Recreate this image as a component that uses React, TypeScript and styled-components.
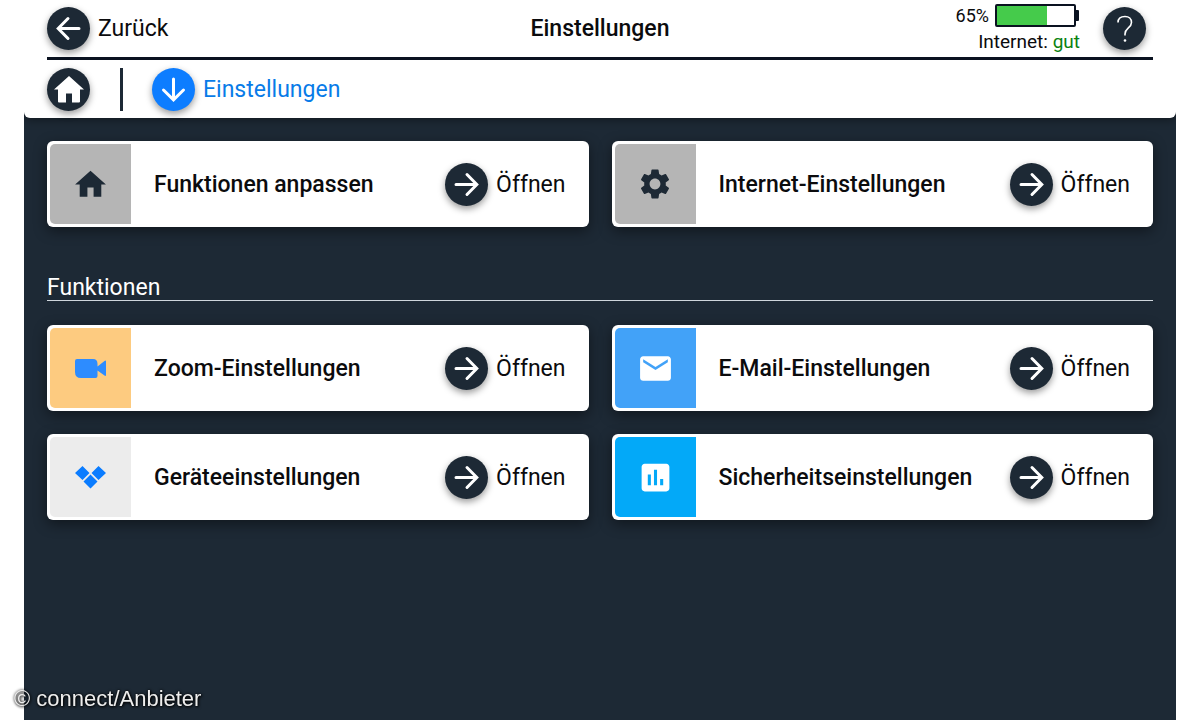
import React from "react";
import styled, { createGlobalStyle } from "styled-components";
import { MdHome, MdSettings, MdEmail, MdInsertChart } from "react-icons/md";

const navy = "#1d2935";

const GlobalStyle = createGlobalStyle`
  * { box-sizing: border-box; }
  body {
    margin: 0;
    background: #fff;
    color: #0b0b0d;
    font-family: Roboto, "Liberation Sans", sans-serif;
    font-size: 23px;
    line-height: 29px;
  }
  button { font: inherit; color: inherit; border: 0; padding: 0; background: none; cursor: pointer; }
  a { color: inherit; text-decoration: none; }
  h1, h2, h3 { margin: 0; font-size: inherit; }
`;

const Shell = styled.div`
  min-height: 100vh;
  margin: 0 24px;
  overflow: hidden;
  background: ${navy};
`;

const Header = styled.header`
  padding: 0 23px;
  background: #fff;
  border-radius: 0 0 6px 6px;
  box-shadow: 0 2px 10px rgba(0, 0, 0, 0.4);
`;

const TopBar = styled.div`
  display: grid;
  grid-template-columns: 1fr auto 1fr;
  align-items: center;
  height: 60px;
  border-bottom: 3px solid #0a1220;
`;

const Title = styled.h1`
  font-weight: 500;
`;

const Breadcrumb = styled.nav`
  display: flex;
  align-items: center;
  height: 58px;
`;

const Divider = styled.span`
  width: 3px;
  height: 43px;
  margin: 0 29px 0 30px;
  background: ${navy};
`;

const Round = styled.span<{ $color?: string }>`
  display: flex;
  flex: none;
  align-items: center;
  justify-content: center;
  width: 43px;
  height: 43px;
  border-radius: 50%;
  background: ${(p) => p.$color ?? navy};
  color: #fff;
  box-shadow: 0 3px 7px rgba(0, 0, 0, 0.4);
`;

const RoundButton = styled.button`
  display: flex;
  align-items: center;
  justify-self: start;
  gap: 8px;
`;

const Crumb = styled.a`
  display: flex;
  align-items: center;
  gap: 8px;
`;

const CrumbText = styled.span`
  color: #087be8;
`;

const Status = styled.div`
  display: flex;
  align-items: center;
  justify-self: end;
  gap: 23px;
  padding-right: 7px;
`;

const Readings = styled.div`
  display: flex;
  flex-direction: column;
  align-items: flex-end;
  gap: 3px;
  font-size: 19px;
  line-height: 23px;
`;

const Charge = styled.div`
  display: flex;
  align-items: center;
  gap: 6px;
  font-size: 18px;
`;

const Good = styled.span`
  color: #0a8210;
`;

const Main = styled.main`
  padding: 23px;
`;

const CardGrid = styled.div`
  display: grid;
  grid-template-columns: 1fr 1fr;
  gap: 23px;
`;

const SectionTitle = styled.h2`
  margin: 49px 0 24px;
  border-bottom: 1px solid #cfd6dc;
  color: #fff;
  font-weight: 400;
  line-height: 24px;
`;

const CardBox = styled.article`
  display: flex;
  align-items: center;
  padding: 3px 23px 3px 3px;
  border-radius: 6px;
  background: #fff;
  box-shadow: 0 4px 14px rgba(0, 0, 0, 0.45);
`;

const Tile = styled.div<{ $bg: string; $fg: string }>`
  display: flex;
  align-items: center;
  justify-content: center;
  width: 81px;
  height: 80px;
  margin-right: 23px;
  border-radius: 5px 0 0 5px;
  background: ${(p) => p.$bg};
  color: ${(p) => p.$fg};
`;

const CardTitle = styled.h3`
  flex: 1;
  font-weight: 500;
`;

const Credit = styled.footer`
  position: fixed;
  left: 14px;
  bottom: 8px;
  color: #eee;
  font-family: "Liberation Sans", sans-serif;
  font-size: 22px;
  line-height: 26px;
  text-shadow: 0 0 3px #000, 1px 1px 3px #000;
`;

const arrowTurn = { right: 0, down: 90, left: 180 };

function Arrow({ to }: { to: keyof typeof arrowTurn }) {
  return (
    <svg
      width="25"
      height="25"
      viewBox="0 0 25 25"
      fill="none"
      stroke="currentColor"
      strokeWidth="3"
      strokeLinecap="round"
      aria-hidden="true"
    >
      <path transform={`rotate(${arrowTurn[to]} 12.5 12.5)`} d="M2 12.5H22M13 2.5L22.800 12.500L13 22.500" />
    </svg>
  );
}

function HouseIcon() {
  return (
    <svg width="30" height="27" viewBox="0 0 30 27" fill="currentColor" aria-hidden="true">
      <path d="M15 0L30 13.500H26V25.500Q26 26.500 25 26.500H18V17.500H12V26.500H5Q4 26.500 4 25.500V13.500H0Z" />
    </svg>
  );
}

function QuestionIcon() {
  return (
    <svg width="18" height="30" viewBox="0 0 18 30" fill="none" stroke="currentColor" strokeWidth="1.600" aria-hidden="true">
      <path d="M2 8.500C2 4.500 5 2.500 9 2.500S15.500 5 15.500 8.500C15.500 14 9 14 9 20V21.500" />
      <circle cx="9" cy="26.500" r="1.300" fill="currentColor" stroke="none" />
    </svg>
  );
}

function BatteryIcon() {
  return (
    <svg width="85" height="23" viewBox="0 0 85 23" aria-hidden="true">
      <rect x="80" y="6" width="4" height="11" rx="1" fill="#0a1220" />
      <rect x="1" y="1" width="79" height="21" rx="1" fill="#fff" stroke="#0a1220" strokeWidth="2" />
      <rect x="2" y="2" width="50" height="19" fill="#45cb4b" />
    </svg>
  );
}

function VideoIcon() {
  return (
    <svg width="31" height="19" viewBox="0 0 31 19" fill="currentColor" aria-hidden="true">
      <path d="M2 0H18Q22.500 0 22.500 5V17Q22.500 19 20.500 19H6Q0 19 0 13V2Q0 0 2 0ZM22.500 7.500L29.500 2Q31 1 31 2.500V16Q31 17.500 29.500 16.500L22.500 11.500Z" />
    </svg>
  );
}

function DiamondsIcon() {
  return (
    <svg width="31" height="23" viewBox="0 0 31 23" fill="currentColor" aria-hidden="true">
      <path d="M7.500 0L14.500 7L7.500 14L0 7ZM23.500 0L31 7L23.500 14L16.500 7ZM15.500 8.500L22.500 15.500L15.500 22.500L8.500 15.500Z" />
    </svg>
  );
}

interface CardProps {
  title: string;
  icon: React.ReactNode;
  bg: string;
  fg: string;
}

function Card({ title, icon, bg, fg }: CardProps) {
  return (
    <CardBox>
      <Tile $bg={bg} $fg={fg}>{icon}</Tile>
      <CardTitle>{title}</CardTitle>
      <RoundButton type="button">
        <Round><Arrow to="right" /></Round>
        Öffnen
      </RoundButton>
    </CardBox>
  );
}

export default function App() {
  return (
    <>
      <GlobalStyle />
      <Shell>
        <Header>
          <TopBar>
            <RoundButton type="button">
              <Round><Arrow to="left" /></Round>
              Zurück
            </RoundButton>
            <Title>Einstellungen</Title>
            <Status>
              <Readings>
                <Charge>65% <BatteryIcon /></Charge>
                <div>Internet: <Good>gut</Good></div>
              </Readings>
              <RoundButton type="button" aria-label="Hilfe">
                <Round><QuestionIcon /></Round>
              </RoundButton>
            </Status>
          </TopBar>
          <Breadcrumb>
            <Crumb href="#start" aria-label="Startseite">
              <Round><HouseIcon /></Round>
            </Crumb>
            <Divider />
            <Crumb href="#einstellungen">
              <Round $color="#0d7dff"><Arrow to="down" /></Round>
              <CrumbText>Einstellungen</CrumbText>
            </Crumb>
          </Breadcrumb>
        </Header>
        <Main>
          <CardGrid>
            <Card title="Funktionen anpassen" icon={<MdHome size={37} />} bg="#b5b5b5" fg={navy} />
            <Card title="Internet-Einstellungen" icon={<MdSettings size={36} />} bg="#b5b5b5" fg={navy} />
          </CardGrid>
          <SectionTitle>Funktionen</SectionTitle>
          <CardGrid>
            <Card title="Zoom-Einstellungen" icon={<VideoIcon />} bg="#fdcb80" fg="#2d8cff" />
            <Card title="E-Mail-Einstellungen" icon={<MdEmail size={37} />} bg="#42a2f8" fg="#fff" />
            <Card title="Geräteeinstellungen" icon={<DiamondsIcon />} bg="#ececec" fg="#0a7cff" />
            <Card title="Sicherheitseinstellungen" icon={<MdInsertChart size={37} />} bg="#03a9f8" fg="#fff" />
          </CardGrid>
        </Main>
      </Shell>
      <Credit>© connect/Anbieter</Credit>
    </>
  );
}
